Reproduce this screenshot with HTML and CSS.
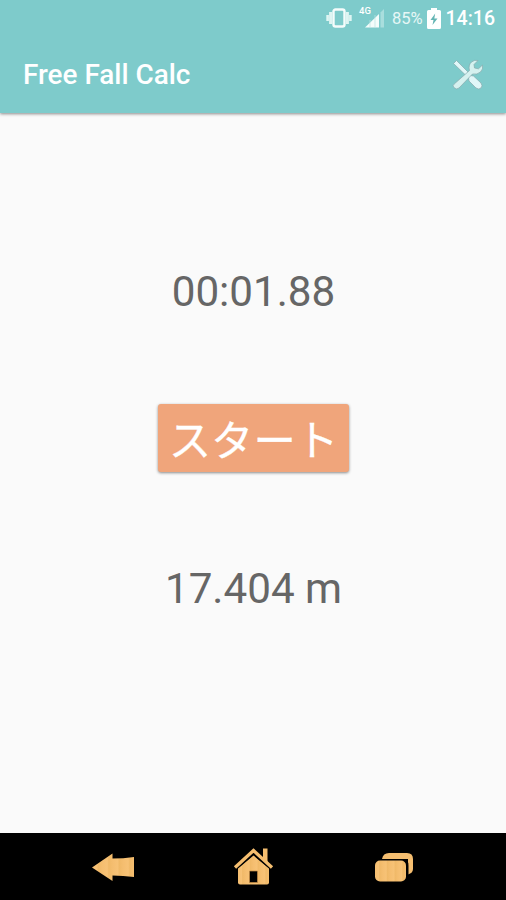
FILE: index.html
```html
<!DOCTYPE html>
<html lang="ja">
<head>
    <meta charset="UTF-8">
    <meta name="viewport" content="width=device-width, initial-scale=1.0">
    <title>Free Fall Calc</title>
    <link rel="stylesheet" href="styles.css">
</head>
<body>
    <header class="header">
        <div class="status-bar">
            <svg class="vibrate" width="26" height="20" viewBox="0 0 26 20">
                <rect x="7.500" y="1.500" width="11" height="17" rx="2" fill="none" stroke="#f4fcfb" stroke-width="2.400"/>
                <path d="M4.700 4v12M21.300 4v12" stroke="#dff5f3" stroke-width="3.200"/>
                <path d="M1.600 7v6M24.400 7v6" stroke="#dff5f3" stroke-width="2.600"/>
            </svg>
            <span class="network">4G</span>
            <svg class="signal" width="20" height="20" viewBox="0 0 20 20">
                <path d="M0 19.500L14 6v13.500z" fill="#f4fcfb"/>
                <path d="M15.500 4.500L19 1v18.500h-3.500z" fill="#a9dedd"/>
                <path d="M5 12v8M10 7v13" stroke="#b9e4e3" stroke-width=".7"/>
            </svg>
            <span class="percent">85%</span>
            <svg class="battery" width="14" height="21" viewBox="0 0 14 21">
                <path d="M4 0h6v2h2.500q1.500 0 1.500 1.500v16q0 1.500-1.500 1.500h-11Q0 21 0 19.500v-16Q0 2 1.500 2H4z" fill="#fff"/>
                <path d="M8.200 5.500L3.500 12h3l-1 5 5-6.500H7.300z" fill="#64b5b4"/>
            </svg>
            <span class="clock">14:16</span>
        </div>
        <div class="app-bar">
            <h1 class="title">Free Fall Calc</h1>
            <svg class="tools" width="32" height="32" viewBox="0 0 32 32">
                <path d="M1.500 4.500L4.500 1.500l11 11 3 4 3 .5 7.500 7q2 3 0 5t-5 0l-7-7-.5-3.500-3-2.500z" fill="#e0f7f8" stroke="#86a9ac" stroke-width=".7"/>
                <path d="M2.200 25L17.500 11.500Q16 6 19.500 3q3-2.500 6.500-1.500L22 5.500l.5 3.500 4 .8L30.500 6q1 4-2 7-3.500 3-8 2L7 29q-2.500 2-4.800-.2T2.200 25z" fill="#d5f1ef" stroke="#86a9ac" stroke-width=".7"/>
            </svg>
        </div>
    </header>

    <main class="content">
        <div class="time">00:01.88</div>
        <button class="start" type="button">スタート</button>
        <div class="distance">17.404 m</div>
    </main>

    <nav class="nav-bar">
        <svg width="44" height="40" viewBox="0 0 44 40">
            <path d="M0 21.500L20.500 7.500v5q10.500 0 21.500-1.500v20q-11-1.500-21.500-1.500v5.500z" fill="url(#wood)"/>
        </svg>
        <svg width="44" height="40" viewBox="0 0 44 40">
            <path d="M5 22L20.500 9 36 22v14.500q0 2-2 2H7q-2 0-2-2z" fill="url(#wood)"/>
            <path d="M1.500 22.500L20.500 6.500 39.500 22.500" fill="none" stroke="#000" stroke-width="4.600"/>
            <path d="M30 2.500h4.500v15l-4.500-4.500z" fill="#f5be70"/>
            <path d="M2 21.500L20.500 4.500 39 21.500" fill="none" stroke="#f5be70" stroke-width="3.300"/>
            <path d="M16.500 25h8v11.500h-8z" fill="#000" stroke="#c58d45" stroke-width=".7"/>
        </svg>
        <svg width="44" height="40" viewBox="0 0 44 40">
            <defs>
                <linearGradient id="wood" x1="0" x2=".25" spreadMethod="repeat">
                    <stop offset="0" stop-color="#f5be70"/>
                    <stop offset=".45" stop-color="#f7c276"/>
                    <stop offset=".6" stop-color="#f0b968"/>
                    <stop offset="1" stop-color="#f5be70"/>
                </linearGradient>
            </defs>
            <path d="M8 13q1-6 7-6h18q6 0 6 6v10q0 4-5 5.500V13z" fill="#f5be70"/>
            <path d="M0 13h28q6.500 0 6.500 6.500V37H0z" fill="#000"/>
            <rect x="1" y="14.500" width="31" height="21" rx="5" fill="url(#wood)"/>
        </svg>
    </nav>
</body>
</html>
```

FILE: styles.css
```css
* {
    box-sizing: border-box;
}

body {
    display: flex;
    flex-direction: column;
    height: 100vh;
    margin: 0;
    overflow: hidden;
    background: #fafafa;
    font-family: Roboto, "Noto Sans CJK JP", sans-serif;
}

.header {
    height: 113px;
    background: #7ecbcb;
    box-shadow: 0 1px 3px rgba(0, 0, 0, 0.45);
}

.status-bar {
    display: flex;
    align-items: center;
    height: 36px;
    padding-right: 11px;
    justify-content: flex-end;
    color: #fff;
}

.network {
    align-self: flex-start;
    margin: 5px 0 0 7px;
    font-size: 9.5px;
    font-weight: 500;
    line-height: 11px;
}

.signal {
    margin: 0 7px 0 -6px;
}

.percent {
    margin-right: 4px;
    font-size: 16.5px;
    color: #e6f7f6;
}

.clock {
    margin-left: 5px;
    font-size: 19.5px;
    font-weight: 500;
}

.app-bar {
    display: flex;
    align-items: center;
    justify-content: space-between;
    height: 77px;
    padding: 0 22px 0 23px;
}

.title {
    margin: 0;
    font-size: 27.9px;
    font-weight: 500;
    color: #fff;
}

.content {
    display: flex;
    flex: 1;
    flex-direction: column;
    align-items: center;
    padding: 154px 0 0 1px;
    color: #666;
    font-size: 42.2px;
    line-height: 50px;
}

.start {
    width: 191px;
    height: 68px;
    margin: 87px 0 92px;
    padding: 0;
    border: 0;
    border-radius: 3px;
    background: #f0a57b;
    box-shadow: 0 1px 3px rgba(0, 0, 0, 0.45);
    color: #fff;
    font: 400 42.4px/66px "Noto Sans CJK JP", sans-serif;
    -webkit-text-stroke: 0.3px #fff;
}

.nav-bar {
    display: flex;
    justify-content: space-between;
    height: 67px;
    padding: 13px 88px 0 92px;
    background: #000;
}
```
